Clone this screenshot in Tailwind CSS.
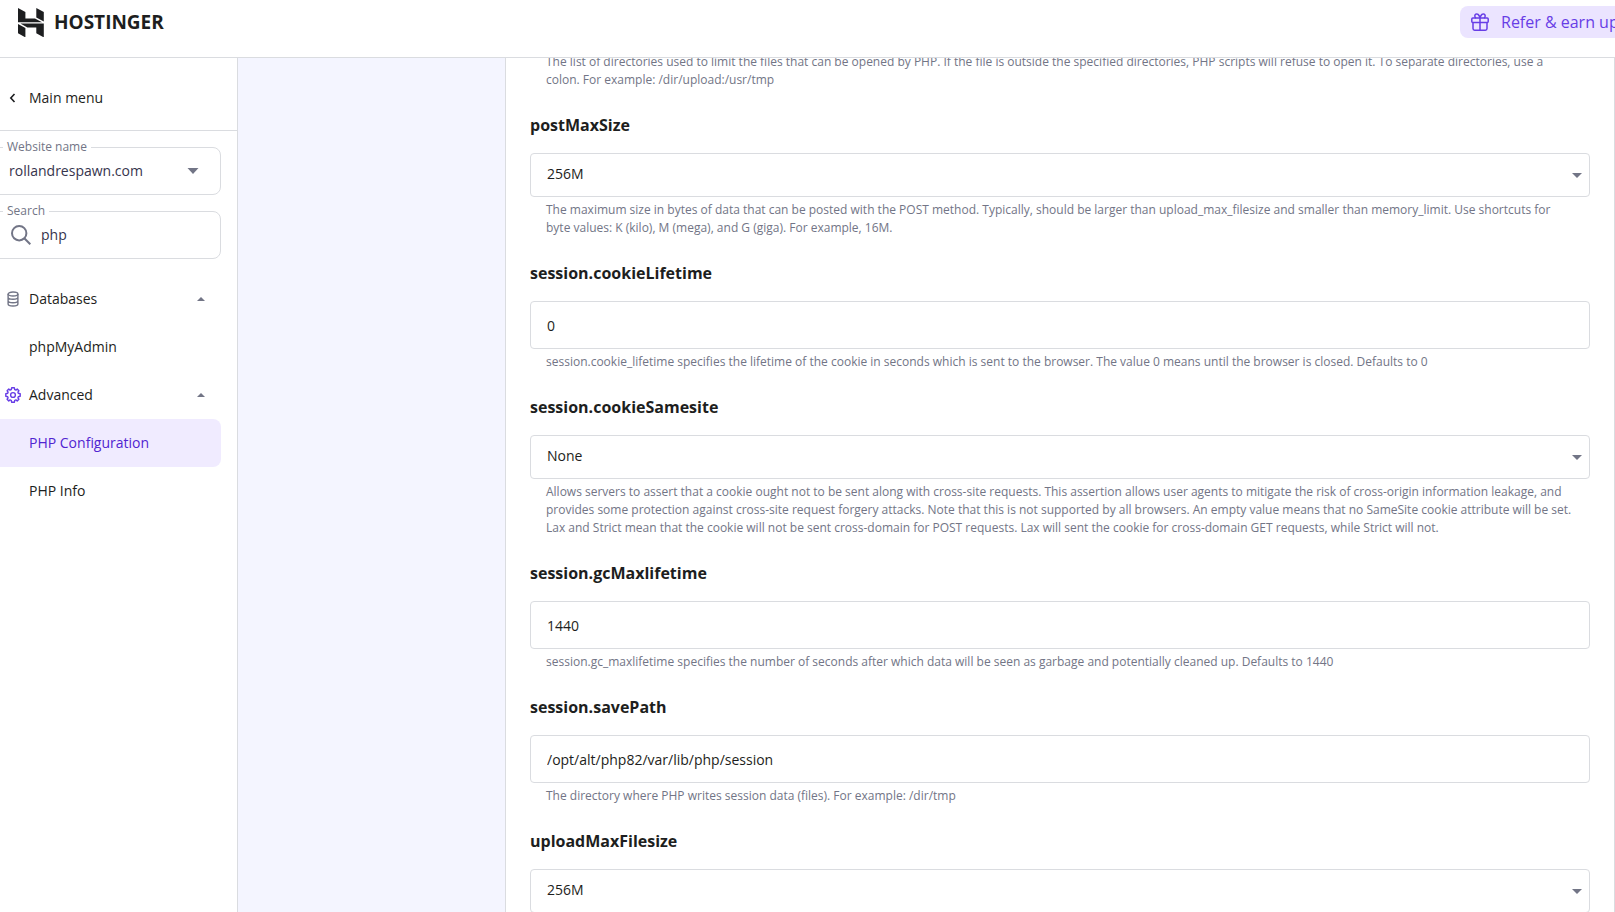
<!DOCTYPE html>
<html lang="en">
<head>
  <meta charset="UTF-8" />
  <meta name="viewport" content="width=device-width, initial-scale=1.0"/>
  <title>PHP Configuration | Hostinger</title>
  <script src="https://cdn.jsdelivr.net/npm/@tailwindcss/browser@4"></script>
</head>

<body class="h-screen flex flex-col overflow-hidden bg-white font-['Open_Sans',sans-serif] text-sm text-[#1d1e20]">

<!-- Header -->
<header class="h-[58px] shrink-0 flex justify-between items-start border-b border-[#dadce0] pt-1.5 pl-[18px]">
  <a href="#" class="flex items-center gap-2.5 text-[19px] leading-8 font-bold">
    <svg class="w-[26px] h-[30px]" viewBox="0 0 26 30" fill="currentColor" aria-hidden="true">
      <path d="M0 1L7.4 5V11.4H17L24 15.2H0ZM18.3 1L25.8 5V14.6L18.3 10.6ZM2.4 16.6H25.8V30.4L18.3 26.2V20.4H9.4ZM0 17L7.4 21V30.4L0 26.2Z"/>
    </svg>
    HOSTINGER
  </a>
  <button class="w-[155px] h-8 flex items-center gap-3 pl-[11px] rounded-l-lg bg-[#ebe4ff] text-[#673de6] text-base whitespace-nowrap overflow-hidden">
    <svg class="w-[18px] h-[18px] shrink-0" viewBox="0 0 18 18" fill="none" stroke="currentColor" stroke-width="1.5" aria-hidden="true">
      <rect x="0.8" y="5" width="16.4" height="4.6" rx="1"/>
      <path d="M2 9.6V15.6a1.6 1.6 0 0 0 1.6 1.6H14.4A1.6 1.6 0 0 0 16 15.6V9.6M9 5V17.2M9 5C8 1.2 6.2 0.4 4.8 1.2C3.2 2.2 3.8 4.4 5 5M9 5C10 1.2 11.8 0.4 13.2 1.2C14.8 2.2 14.2 4.4 13 5"/>
    </svg>
    Refer &amp; earn up
  </button>
</header>

<div class="flex flex-1 min-h-0">

  <!-- Sidebar -->
  <aside class="w-[238px] shrink-0 overflow-hidden border-r border-[#dadce0]">
    <a href="#" class="h-[73px] flex items-center gap-3 pl-2 pt-2 border-b border-[#dadce0] font-medium">
      <svg class="w-[9px] h-[10px]" viewBox="0 0 9 10" fill="none" stroke="currentColor" stroke-width="1.6" aria-hidden="true"><path d="M6.5 1L2.8 5L6.5 9"/></svg>
      Main menu
    </a>

    <div class="pr-4 pt-4">
      <div class="relative -ml-2 h-12 flex items-center border border-[#dadce0] rounded-lg">
        <label for="site" class="absolute -top-2.5 left-2.5 px-1 bg-white text-xs leading-[18px] text-[#727586]">Website name</label>
        <select id="site" class="appearance-none w-full h-full pl-4 bg-transparent text-[#36344d] outline-none">
          <option>rollandrespawn.com</option>
        </select>
        <svg class="absolute right-[21px] w-3 h-1.5 pointer-events-none" viewBox="0 0 12 6" fill="#727586" aria-hidden="true"><path d="M0.5 0H11.5L6 6Z"/></svg>
      </div>

      <div class="relative -ml-2 mt-4 h-12 flex items-center gap-2.5 pl-[18px] border border-[#dadce0] rounded-lg">
        <label for="search" class="absolute -top-2.5 left-2.5 px-1 bg-white text-xs leading-[18px] text-[#727586]">Search</label>
        <svg class="w-5 h-5 shrink-0" viewBox="0 0 20 20" fill="none" stroke="#727586" stroke-width="2" aria-hidden="true"><circle cx="8.2" cy="8.2" r="7.2"/><path d="M13.3 13.3L19.3 19.3"/></svg>
        <input id="search" type="text" value="php" class="w-full min-w-0 bg-transparent text-[#36344d] outline-none"/>
      </div>
    </div>

    <nav class="pr-4 pt-4 font-medium">
      <button class="w-full h-12 flex items-center gap-2 pl-[5px] pr-4">
        <svg class="w-4 h-4" viewBox="0 0 16 16" fill="none" stroke="#727586" stroke-width="1.4" aria-hidden="true"><ellipse cx="8" cy="3" rx="4.9" ry="2"/><path d="M3.1 3V13C3.1 14.2 5.2 15 8 15S12.9 14.2 12.9 13V3M3.1 6.3C3.1 7.5 5.2 8.3 8 8.3S12.9 7.5 12.9 6.3M3.1 9.7C3.1 10.9 5.2 11.7 8 11.7S12.9 10.9 12.9 9.7"/></svg>
        Databases
        <svg class="ml-auto w-2 h-1" viewBox="0 0 8 4" fill="#727586" aria-hidden="true"><path d="M0 4H8L4 0Z"/></svg>
      </button>
      <a href="#" class="h-12 flex items-center pl-[29px]">phpMyAdmin</a>
      <button class="w-full h-12 flex items-center gap-2 pl-[5px] pr-4">
        <svg class="w-4 h-4" viewBox="0 0 16 16" fill="none" stroke="#673de6" stroke-width="1.4" stroke-linejoin="round" aria-hidden="true">
          <circle cx="8" cy="8" r="2.4"/>
          <path d="M6.7 0.8H9.3L9.8 2.7L10.9 3.1L12.2 2.1L13.9 3.8L12.9 5.1L13.3 6.2L15.2 6.7V9.3L13.3 9.8L12.9 10.9L13.9 12.2L12.2 13.9L10.9 12.9L9.8 13.3L9.3 15.2H6.7L6.2 13.3L5.1 12.9L3.8 13.9L2.1 12.2L3.1 10.9L2.7 9.8L0.8 9.3V6.7L2.7 6.2L3.1 5.1L2.1 3.8L3.8 2.1L5.1 3.1L6.2 2.7Z"/>
        </svg>
        Advanced
        <svg class="ml-auto w-2 h-1" viewBox="0 0 8 4" fill="#727586" aria-hidden="true"><path d="M0 4H8L4 0Z"/></svg>
      </button>
      <a href="#" class="h-12 flex items-center pl-[29px] rounded-r-lg bg-[#f0ebff] text-[#5025d1]">PHP Configuration</a>
      <a href="#" class="h-12 flex items-center pl-[29px]">PHP Info</a>
    </nav>
  </aside>

  <!-- PHP options -->
  <main class="flex-1 min-w-0 overflow-hidden bg-[#f4f5ff] pl-[267px]">
    <form class="-mt-[5px] flex flex-col gap-6 px-6 bg-white border-x border-[#dadce0]">
      <p class="px-4 text-xs leading-[18px] text-[#727586]">The list of directories used to limit the files that can be opened by PHP. If the file is outside the specified directories, PHP scripts will refuse to open it. To separate directories, use a colon. For example: /dir/upload:/usr/tmp</p>

      <div>
        <label for="postMaxSize" class="block mb-4 text-base font-bold">postMaxSize</label>
        <div class="relative flex items-center">
          <select id="postMaxSize" class="appearance-none w-full h-11 px-4 pb-0.5 border border-[#dadce0] rounded bg-white">
            <option>256M</option>
          </select>
          <svg class="absolute right-2 w-2.5 h-[5px] pointer-events-none" viewBox="0 0 10 5" fill="#727586" aria-hidden="true"><path d="M0 0H10L5 5Z"/></svg>
        </div>
        <p class="mt-1 px-4 text-xs leading-[18px] text-[#727586]">The maximum size in bytes of data that can be posted with the POST method. Typically, should be larger than upload_max_filesize and smaller than memory_limit. Use shortcuts for byte values: K (kilo), M (mega), and G (giga). For example, 16M.</p>
      </div>

      <div>
        <label for="cookieLifetime" class="block mb-4 text-base font-bold">session.cookieLifetime</label>
        <input id="cookieLifetime" type="text" value="0" class="block w-full h-12 px-4 border border-[#dadce0] rounded"/>
        <p class="mt-1 px-4 text-xs leading-[18px] text-[#727586]">session.cookie_lifetime specifies the lifetime of the cookie in seconds which is sent to the browser. The value 0 means until the browser is closed. Defaults to 0</p>
      </div>

      <div>
        <label for="cookieSamesite" class="block mb-4 text-base font-bold">session.cookieSamesite</label>
        <div class="relative flex items-center">
          <select id="cookieSamesite" class="appearance-none w-full h-11 px-4 pb-0.5 border border-[#dadce0] rounded bg-white">
            <option>None</option>
            <option>Lax</option>
            <option>Strict</option>
          </select>
          <svg class="absolute right-2 w-2.5 h-[5px] pointer-events-none" viewBox="0 0 10 5" fill="#727586" aria-hidden="true"><path d="M0 0H10L5 5Z"/></svg>
        </div>
        <p class="mt-1 px-4 text-xs leading-[18px] text-[#727586]">Allows servers to assert that a cookie ought not to be sent along with cross-site requests. This assertion allows user agents to mitigate the risk of cross-origin information leakage, and provides some protection against cross-site request forgery attacks. Note that this is not supported by all browsers. An empty value means that no SameSite cookie attribute will be set. Lax and Strict mean that the cookie will not be sent cross-domain for POST requests. Lax will sent the cookie for cross-domain GET requests, while Strict will not.</p>
      </div>

      <div>
        <label for="gcMaxlifetime" class="block mb-4 text-base font-bold">session.gcMaxlifetime</label>
        <input id="gcMaxlifetime" type="text" value="1440" class="block w-full h-12 px-4 border border-[#dadce0] rounded"/>
        <p class="mt-1 px-4 text-xs leading-[18px] text-[#727586]">session.gc_maxlifetime specifies the number of seconds after which data will be seen as garbage and potentially cleaned up. Defaults to 1440</p>
      </div>

      <div>
        <label for="savePath" class="block mb-4 text-base font-bold">session.savePath</label>
        <input id="savePath" type="text" value="/opt/alt/php82/var/lib/php/session" class="block w-full h-12 px-4 border border-[#dadce0] rounded"/>
        <p class="mt-1 px-4 text-xs leading-[18px] text-[#727586]">The directory where PHP writes session data (files). For example: /dir/tmp</p>
      </div>

      <div>
        <label for="uploadMaxFilesize" class="block mb-4 text-base font-bold">uploadMaxFilesize</label>
        <div class="relative flex items-center">
          <select id="uploadMaxFilesize" class="appearance-none w-full h-11 px-4 pb-0.5 border border-[#dadce0] rounded bg-white">
            <option>256M</option>
          </select>
          <svg class="absolute right-2 w-2.5 h-[5px] pointer-events-none" viewBox="0 0 10 5" fill="#727586" aria-hidden="true"><path d="M0 0H10L5 5Z"/></svg>
        </div>
      </div>
    </form>
  </main>

</div>

</body>
</html>
